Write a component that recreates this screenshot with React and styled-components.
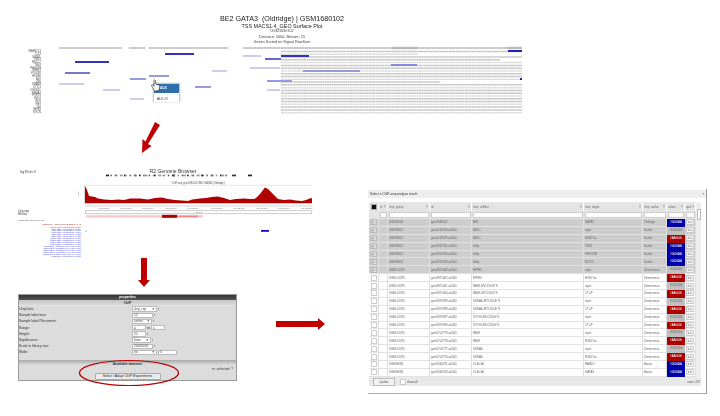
import React from "react";
import styled, { createGlobalStyle } from "styled-components";

const GlobalStyle = createGlobalStyle`
  html, body { margin: 0; padding: 0; background: #fff; }
  body { font-family: "Liberation Sans", Arial, sans-serif; }
`;

const geneLabels = [
  "SMARCC1", "TLX3", "MYB2L", "PBX1", "NKX2-2", "TBX4", "PHOX2B", "GRHL2", "POU2F2", "HOXB5",
  "ALK", "JUN", "SMAD4", "CYTL1", "CDKN1C", "HMGA1", "FOXO1", "LMO1", "GFI1", "MET", "ID2", "MEIS2", "MYCN",
];

const headerSegments = [[59, 122], [129, 145], [149, 228], [243, 522]];
const stripeEnds = { 1: 418, 3: 500, 11: 440 };

const heatBars = [
  [75, 62, 34, "#3333bb"], [165, 54, 29, "#3333bb"], [65, 73, 25, "#7777cc"], [149, 76, 20, "#9999dd"],
  [130, 79, 16, "#9999dd"], [59, 84, 25, "#ccccee"], [103, 90, 17, "#ccccee"], [195, 87, 16, "#9999dd"],
  [130, 99, 14, "#ccccee"], [212, 71, 15, "#ccccee"], [243, 56, 18, "#ccccee"], [265, 59, 16, "#6666cc"],
  [281, 56, 28, "#3333bb"], [250, 68, 30, "#ccccee"], [303, 71, 31, "#9999dd"], [334, 71, 26, "#9999dd"],
  [267, 81, 25, "#9999dd"], [267, 90, 13, "#ccccee"], [391, 65, 26, "#8888dd"], [508, 51, 14, "#2222aa"], [520, 79, 2, "#2222aa"],
];

const signal = [
  [85, 185], [87, 189], [89, 195], [95, 196], [98, 197.5], [104, 198.5], [112, 199], [118, 198.5], [124, 199], [130, 197.5],
  [140, 197.5], [148, 198.5], [155, 197], [162, 196.5], [168, 198], [175, 199], [182, 199.5], [188, 200], [192, 198.5],
  [200, 197.5], [206, 197], [212, 196], [218, 195.5], [224, 197], [230, 199], [236, 198], [244, 197.5], [250, 198], [254, 198],
  [256, 197], [260, 193], [263, 189], [265, 186.5], [268, 188], [272, 192], [275, 195], [278, 198], [284, 199], [290, 198.5],
  [296, 199.5], [302, 200], [306, 199], [311, 197], [312, 197.5],
];

const tickXs = [104, 126, 148, 171, 193, 217, 239, 262, 284, 307];

const ideogram = Array.from({ length: 38 }, (_, i) => ({
  x: 106 + i * 3.2 + (i % 3),
  w: i % 4 === 0 ? 3 : 1.6,
  fill: i === 17 ? "#d99a2b" : i % 5 === 0 ? "#222" : i % 2 ? "#666" : "#999",
}));

const browserLabels = [
  "GSE101295_gsm2871002-e0200", "GSE94822_gsm3128076-e0200", "GSE94822_gsm3128079-e0200", "GSE94822_gsm2915911-e0200",
  "GSE94822_gsm2915910-e0200", "GSE94822_gsm2915909-e0200", "GSE101295_gsm2871003-e0200", "GSE101295_gsm2871001-e0200",
  "GSE101295_gsm2871000-e0200", "GSE101295_gsm2870999-e0200", "GSE101295_gsm2870998-MYCN-e0200", "GSE101295_gsm2870997-MYCN-e0200",
  "GSE101295_gsm2870996-MYCN-e0200", "GSE101295_gsm2702779-MYCN-e0200", "GSE89683_gsm2664371-CLB-GA-e0200", "GSE89683_gsm2664370-e0200",
];

const rows = [
  ["GSE65664", "gsm1680102", "BE2", "GATA3", "Oldridge", "blue", true],
  ["GSE94822", "gsm3128076-e0200", "BE2C", "input", "Durbin", "grey", true],
  ["GSE94822", "gsm3128079-e0200", "BE2C", "H3K27ac", "Durbin", "red", true],
  ["GSE94822", "gsm2915911-e0200", "Kelly", "TBX2", "Durbin", "blue", true],
  ["GSE94822", "gsm2915910-e0200", "Kelly", "PHOX2B", "Durbin", "blue", true],
  ["GSE94822", "gsm2915909-e0200", "Kelly", "MYCN", "Durbin", "blue", true],
  ["GSE101295", "gsm2871003-e0200", "EP983", "input", "Zimmerman", "grey", true],
  ["GSE101295", "gsm2871002-e0200", "EP983", "H3K27ac", "Zimmerman", "red", false],
  ["GSE101295", "gsm2871001-e0200", "NB69-MYCN24h*S", "input", "Zimmerman", "grey", false],
  ["GSE101295", "gsm2871000-e0200", "NB69-MYCN24h*S", "CTCF", "Zimmerman", "red", false],
  ["GSE101295", "gsm2870999-e0200", "SKNAS-MYCN24h*S", "input", "Zimmerman", "grey", false],
  ["GSE101295", "gsm2870998-e0200", "SKNAS-MYCN24h*S", "CTCF", "Zimmerman", "red", false],
  ["GSE101295", "gsm2870997-e0200", "SY5Y6-MYCN24h*S", "input", "Zimmerman", "grey", false],
  ["GSE101295", "gsm2870996-e0200", "SY5Y6-MYCN24h*S", "CTCF", "Zimmerman", "red", false],
  ["GSE101295", "gsm2702779-e0200", "NB69", "input", "Zimmerman", "grey", false],
  ["GSE101295", "gsm2702778-e0200", "NB69", "H3K27ac", "Zimmerman", "red", false],
  ["GSE101295", "gsm2702777-e0200", "SKNAS", "input", "Zimmerman", "grey", false],
  ["GSE101295", "gsm2702776-e0200", "SKNAS", "H3K27ac", "Zimmerman", "red", false],
  ["GSE89683", "gsm2664371-e0200", "CLB-GA", "HAND2", "Boeva", "blue", false],
  ["GSE89683", "gsm2664370-e0200", "CLB-GA", "GATA3", "Boeva", "blue", false],
];

const swatches = {
  blue: { bg: "#0000aa", fg: "#fff", label: "#0000AA" },
  red: { bg: "#aa0000", fg: "#fff", label: "#AA0000" },
  grey: { bg: "#c0c0c0", fg: "#666", label: "#D0D0D0" },
};

const headLabels = ["nr", "chip_group", "id", "chip_cellline", "chip_target", "chip_author", "colors", "upd"];

const Slide = styled.div`
  width: 720px;
  height: 416px;
  padding-top: 15px;
  box-sizing: border-box;
  overflow: hidden;
  background: #fff;
  display: flex;
  flex-direction: column;
`;

const TitleBlock = styled.div`
  width: 564px;
  height: 31px;
  text-align: center;
  filter: blur(0.25px);
`;

const TitleLine = styled.div`
  font-size: ${(p) => p.$size}px;
  line-height: ${(p) => p.$height}px;
  color: ${(p) => p.$color || "#222"};
  white-space: pre;
`;

const HeatSvg = styled.svg`
  display: block;
  width: 540px;
  height: 70px;
  filter: blur(0.35px);
`;

const Arrow = styled.svg`
  display: block;
  flex: none;
  margin-left: ${(p) => p.$left || 0}px;
  margin-top: ${(p) => p.$top || 0}px;
`;

const Lower = styled.div`
  display: flex;
  margin-top: 13px;
`;

const LeftColumn = styled.div`
  width: 368px;
  flex: none;
  display: flex;
  flex-direction: column;
`;

const BrowserSvg = styled.svg`
  display: block;
  width: 320px;
  height: 92px;
  filter: blur(0.25px);
`;

const PanelRow = styled.div`
  display: flex;
  align-items: flex-start;
  padding-left: 18px;
  margin-top: 7px;
`;

const Panel = styled.div`
  position: relative;
  width: 219px;
  height: 87px;
  box-sizing: border-box;
  flex: none;
  border: 1px solid #9a9a9a;
  background: #dcdcdc;
  font-size: 3.4px;
  color: #333;
  display: flex;
  flex-direction: column;
`;

const PanelHead = styled.div`
  height: 5px;
  background: linear-gradient(#333, #555);
  color: #fff;
  font-weight: bold;
  text-align: center;
  line-height: 5px;
  filter: blur(0.2px);
`;

const PanelSub = styled.div`
  height: 6px;
  background: linear-gradient(#c4c4c4, #e0e0e0);
  text-align: center;
  font-weight: bold;
  line-height: 6px;
`;

const FieldRow = styled.div`
  height: 6.2px;
  display: grid;
  grid-template-columns: 113px 1fr;
  align-items: center;
  filter: blur(0.2px);
`;

const FieldControls = styled.div`
  display: flex;
  align-items: center;
  gap: 1px;
`;

const FieldBox = styled.span`
  display: flex;
  justify-content: space-between;
  align-items: center;
  width: ${(p) => p.$width}px;
  height: 5.4px;
  padding: 0 1px;
  box-sizing: border-box;
  background: #fff;
  border: 0.4px solid #bbb;
  font-size: 3.2px;
  color: #444;
`;

const PanelFoot = styled.div`
  flex: 1;
  margin-top: 4px;
  background: linear-gradient(#a8a8a8 0, #dcdcdc 5px);
  display: flex;
  flex-direction: column;
  align-items: center;
  padding-top: 2px;
  position: relative;
`;

const FootTitle = styled.div`
  font-weight: bold;
  line-height: 4px;
`;

const FootRow = styled.div`
  width: 100%;
  display: flex;
  justify-content: flex-end;
  padding-right: 3px;
  box-sizing: border-box;
  line-height: 5px;
  margin-top: 1px;
`;

const AdaptButton = styled.button`
  width: 66px;
  height: 7px;
  padding: 0;
  margin-top: 1px;
  font: 3.4px "Liberation Sans", Arial, sans-serif;
  color: #222;
  background: #ececec;
  border: 0.5px solid #aaa;
  border-radius: 1px;
`;

const Ring = styled.svg`
  position: absolute;
  left: 59px;
  top: 64px;
  pointer-events: none;
`;

const Dialog = styled.div`
  margin-top: 23px;
  width: 339px;
  height: 205px;
  box-sizing: border-box;
  flex: none;
  background: #fff;
  border-right: 1.5px solid #9a9a9a;
  border-bottom: 1.5px solid #a8a8a8;
  display: flex;
  flex-direction: column;
  filter: blur(0.3px);
`;

const DialogBar = styled.div`
  height: 8px;
  margin-top: 1px;
  background: #eeeeee;
  font-size: 3.2px;
  line-height: 8px;
  padding: 0 2px;
  color: #333;
  display: flex;
  justify-content: space-between;
`;

const GridBox = styled.div`
  position: relative;
  margin: 4px 0 0 1px;
  width: 332px;
  height: 184px;
  background: #e8e8e8;
  border-radius: 2px;
  overflow: hidden;
  padding-top: 1px;
  box-sizing: border-box;
`;

const Table = styled.div`
  width: 327px;
  font-size: 2.9px;
  color: #666;
`;

const Row = styled.div`
  display: grid;
  grid-template-columns: 10px 9px 42px 42px 112px 59px 24px 18px 11px;
  height: ${(p) => p.$height || 7.9}px;
  background: ${(p) => (p.$picked ? "#cdcdcd" : p.$head ? "#e4e4e4" : "#fff")};
`;

const HeadCell = styled.div`
  padding: 0 1px;
  line-height: 8px;
  border-right: 0.5px solid #fff;
  overflow: hidden;
  white-space: nowrap;
  display: flex;
  justify-content: space-between;
  align-items: center;
`;

const BlackBox = styled.span`
  display: block;
  width: 4px;
  height: 4px;
  margin: 0 auto;
  background: #111;
  outline: 0.5px solid #aaa;
`;

const FilterCell = styled.div`
  padding: 1px;
`;

const FilterBox = styled.span`
  display: block;
  height: 5.5px;
  background: #fff;
  border: 0.4px solid #ccc;
  box-sizing: border-box;
`;

const Cell = styled.div`
  padding: 0 1px;
  border-right: 0.5px solid #ddd;
  border-bottom: 0.5px solid #e2e2e2;
  overflow: hidden;
  white-space: nowrap;
  display: flex;
  align-items: center;
`;

const Tick = styled.span`
  display: block;
  flex: none;
  width: 4px;
  height: 4px;
  margin: 0 auto;
  background: ${(p) => (p.$on ? "#d8d8d8" : "#fff")};
  border: 0.5px solid ${(p) => (p.$on ? "#bbb" : "#ccc")};
  border-radius: 0.5px;
  font-size: 3px;
  line-height: 4px;
  text-align: center;
  color: #444;
`;

const Swatch = styled.div`
  background: ${(p) => swatches[p.$tone].bg};
  color: ${(p) => swatches[p.$tone].fg};
  text-align: center;
  line-height: 7.4px;
  overflow: hidden;
`;

const SmallBtn = styled.span`
  display: block;
  width: 9px;
  height: 6px;
  margin: 0 auto;
  background: #f2f2f2;
  border: 0.5px solid #ccc;
  text-align: center;
  line-height: 5.5px;
  box-sizing: border-box;
`;

const Scrollbar = styled.div`
  position: absolute;
  right: 0;
  top: 0;
  bottom: 8px;
  width: 5px;
  background: #eee;
`;

const ScrollThumb = styled.div`
  margin: 7px 0.5px 0;
  height: 9px;
  background: #fff;
  border: 0.5px solid #bbb;
`;

const GridFoot = styled.div`
  position: absolute;
  left: 0;
  right: 0;
  bottom: 0;
  height: 8px;
  background: #e8e8e8;
  display: flex;
  align-items: center;
  font-size: 2.9px;
  color: #555;
  padding: 0 1px 0 4px;
`;

const UpdateBtn = styled.span`
  width: 20px;
  height: 6.5px;
  background: #f2f2f2;
  border: 0.5px solid #bbb;
  text-align: center;
  line-height: 6px;
  margin-right: 5px;
`;

const ShowAll = styled.span`
  display: flex;
  align-items: center;
  gap: 1px;
  flex: 1;
  & > span {
    margin: 0;
  }
`;

const PopupWrap = styled.div`
  position: absolute;
  left: 153px;
  top: 83px;
  width: 27px;
  height: 19px;
  box-sizing: border-box;
  background: #fff;
  border: 0.5px solid #ccc;
  border-radius: 1px;
  box-shadow: 0 0 1.5px rgba(0, 0, 0, 0.4);
  font-size: 3.4px;
  filter: blur(0.2px);
`;

const PopupItem = styled.div`
  height: 9px;
  line-height: ${(p) => (p.$active ? "9px" : "12px")};
  padding-left: ${(p) => (p.$active ? "6px" : "3px")};
  background: ${(p) => (p.$active ? "#2f6eac" : "#fff")};
  color: ${(p) => (p.$active ? "#fff" : "#333")};
  font-weight: ${(p) => (p.$active ? "bold" : "normal")};
`;

const Hand = styled.svg`
  position: absolute;
  left: -3px;
  top: -5px;
`;

function HeatMap() {
  return (
    <HeatSvg viewBox="0 46 540 70">
      {geneLabels.map((name, i) => (
        <text key={name} x="41" y={52 + i * 2.78} fontSize="2.6" textAnchor="end" fill="#444">{name}</text>
      ))}
      {headerSegments.map(([a, b]) => (
        <line key={a} x1={a} x2={b} y1="48" y2="48" stroke="#aaa" strokeWidth="1.3" strokeDasharray="1.2 0.3" />
      ))}
      <rect x="392" y="46.8" width="26" height="2.4" fill="#bbb" />
      <rect x="508" y="46.8" width="14" height="2.4" fill="#bbb" />
      {geneLabels.map((name, i) => (
        <line
          key={name}
          x1="281"
          x2={stripeEnds[i] || 522}
          y1={51.5 + i * 2.78}
          y2={51.5 + i * 2.78}
          stroke={i % 3 === 1 ? "#dcdcdc" : "#c4c4c4"}
          strokeWidth="1.5"
          strokeDasharray="2 0.3"
        />
      ))}
      {heatBars.map(([x, y, w, fill]) => (
        <rect key={`${x}-${y}`} x={x} y={y - 1} width={w} height="2" fill={fill} />
      ))}
    </HeatSvg>
  );
}

function Popup() {
  // context menu + hand cursor sitting over the heat map
  return (
    <PopupWrap>
      <PopupItem $active>ALK</PopupItem>
      <PopupItem>ALK-YI</PopupItem>
      <Hand viewBox="0 0 10 14" width="10" height="14">
        <path
          d="M3 1.2c.7-.6 1.4-.2 1.5.6l.4 3.4 2.6.7c1 .3 1.4 1 1.2 2l-.6 3.4-4.2 1-2.2-3.6L.4 6.6c-.3-.7.5-1.2 1.1-.8l1.6 1.5z"
          fill="#fff"
          stroke="#333"
          strokeWidth="0.7"
        />
      </Hand>
    </PopupWrap>
  );
}

function Browser() {
  const area = `85,202.3 ${signal.map((p) => p.join(",")).join(" ")} 312,202.3`;
  return (
    <BrowserSvg viewBox="0 165 320 92">
      <text x="20" y="172" fontSize="3.8" fill="#444">hg19chr2</text>
      <text x="173" y="172" fontSize="5" fill="#333" textAnchor="middle">R2 Genome Browser</text>
      {ideogram.map((b) => (
        <rect key={b.x} x={b.x} y="173.6" width={b.w} height="1.7" fill={b.fill} />
      ))}
      <rect x="232" y="173.6" width="4" height="1.7" fill="#333" />
      <rect x="248" y="173.6" width="4" height="1.7" fill="#222" />
      <text x="198" y="183" fontSize="2.6" fill="#555" textAnchor="middle">ChIP-seq gsm1680102 BE2 GATA3 (Oldridge)</text>
      <line x1="85" x2="312" y1="184.3" y2="184.3" stroke="#f4c9c9" strokeWidth="0.6" />
      {[188, 192, 196, 200].map((y) => (
        <line key={y} x1="85" x2="312" y1={y} y2={y} stroke="#f2f2f2" strokeWidth="0.4" />
      ))}
      <line x1="84.5" x2="84.5" y1="184" y2="203" stroke="#999" strokeWidth="0.4" />
      <text x="79" y="193" fontSize="2" fill="#666" transform="rotate(-90 79 193)" textAnchor="middle">Signal</text>
      <polygon points={area} fill="#b00000" />
      <line x1="85" x2="312" y1="205" y2="205" stroke="#aaa" strokeWidth="0.5" />
      {tickXs.map((x) => (
        <text key={x} x={x} y="208.4" fontSize="2.2" textAnchor="middle" fill="#666">86,145,000</text>
      ))}
      <rect x="85.5" y="209.8" width="226" height="3" fill="#fff" stroke="#999" strokeWidth="0.5" />
      <text x="199" y="212" fontSize="2" textAnchor="middle" fill="#666">GATA3</text>
      <rect x="86" y="214.2" width="117" height="2.4" fill="#f8c8c8" />
      <rect x="162" y="213.8" width="15" height="3" fill="#b00000" />
      <rect x="177" y="214.6" width="21" height="1.6" fill="#e88" />
      <text x="18" y="211" fontSize="2.6" fill="#444">Coverage</text>
      <text x="18" y="214" fontSize="2.6" fill="#444">RefSeq</text>
      <text x="18" y="219.5" fontSize="2.4" fill="#444">r46mm10_gene_reg_ref</text>
      <text x="81" y="223.5" fontSize="2.3" fill="#c03030" textAnchor="end">GSE65664_gsm1680102-BE2-GATA3</text>
      {browserLabels.map((name, i) => (
        <text key={name} x="81" y={226.6 + i * 1.93} fontSize="2.1" fill="#5555dd" textAnchor="end">{name}</text>
      ))}
      <rect x="85.5" y="229.3" width="1" height="1.6" fill="#9999dd" />
      <rect x="261" y="229" width="8" height="1.8" fill="#1111bb" />
    </BrowserSvg>
  );
}

function Properties() {
  return (
    <Panel>
      <PanelHead>properties</PanelHead>
      <PanelSub>ChIP</PanelSub>
      <FieldRow>ChipData:<FieldControls><FieldBox $width={25}>chip_rep<span>▼</span></FieldBox> i</FieldControls></FieldRow>
      <FieldRow>Sample label size:<FieldControls><FieldBox $width={21}>12</FieldBox> i</FieldControls></FieldRow>
      <FieldRow>Sample label Placement:<FieldControls><FieldBox $width={20}>center<span>▼</span></FieldBox> i</FieldControls></FieldRow>
      <FieldRow>Range:<FieldControls><FieldBox $width={14}>a</FieldBox> to <FieldBox $width={14}>a</FieldBox></FieldControls></FieldRow>
      <FieldRow>Height:<FieldControls><FieldBox $width={14}>50</FieldBox> i</FieldControls></FieldRow>
      <FieldRow>Significance:<FieldControls><FieldBox $width={19}>false<span>▼</span></FieldBox> i</FieldControls></FieldRow>
      <FieldRow>Scale to library size:<FieldControls><FieldBox $width={21}>20000000</FieldBox> i</FieldControls></FieldRow>
      <FieldRow>Slider<FieldControls><FieldBox $width={25}>no<span>▼</span></FieldBox><FieldBox $width={19}>0</FieldBox></FieldControls></FieldRow>
      <PanelFoot>
        <FootTitle>Available datasets</FootTitle>
        <FootRow>nr. selected: ?</FootRow>
        <AdaptButton>Select / Adapt ChIP-Experiments</AdaptButton>
      </PanelFoot>
      <Ring width="102" height="28" viewBox="0 0 102 28">
        <ellipse cx="51" cy="14" rx="49.5" ry="12.5" fill="none" stroke="#b80000" strokeWidth="1.2" />
      </Ring>
    </Panel>
  );
}

function ResultTable() {
  return (
    <Table>
      <Row $head $height={8}>
        <HeadCell><BlackBox /></HeadCell>
        {headLabels.map((label) => (
          <HeadCell key={label}>{label}<span>Y</span></HeadCell>
        ))}
      </Row>
      <Row $head $height={8}>
        <FilterCell />
        {headLabels.map((label) => (
          <FilterCell key={label}><FilterBox /></FilterCell>
        ))}
      </Row>
      {rows.map((r) => (
        <Row key={r[1]} $picked={r[6]}>
          <Cell><Tick $on={r[6]}>{r[6] ? "✓" : ""}</Tick></Cell>
          <Cell />
          <Cell>{r[0]}</Cell>
          <Cell>{r[1]}</Cell>
          <Cell>{r[2]}</Cell>
          <Cell>{r[3]}</Cell>
          <Cell>{r[4]}</Cell>
          <Swatch $tone={r[5]}>{swatches[r[5]].label}</Swatch>
          <Cell><SmallBtn>s.s.</SmallBtn></Cell>
        </Row>
      ))}
    </Table>
  );
}

export default function App() {
  return (
    <>
      <GlobalStyle />
      <Slide>
        <TitleBlock>
          <TitleLine $size={7.2} $height={8}>BE2 GATA3  (Oldridge) | GSM1680102</TitleLine>
          <TitleLine $size={5.4} $height={6}>TSS MACS1.4_GEO Surface Plot</TitleLine>
          <TitleLine $size={3.8} $height={5.5} $color="#555">GSM1680102</TitleLine>
          <TitleLine $size={3.8} $height={5} $color="#444">Distance: 5000, Binsize: 25</TitleLine>
          <TitleLine $size={3.8} $height={5.5} $color="#444">Genes Sorted on Signal RowSum</TitleLine>
        </TitleBlock>
        <HeatMap />
        <Popup />
        <Arrow $left={139} $top={6} width="24" height="31" viewBox="0 0 24 31">
          <polygon points="16,0 21,3 9,22 12.5,24 3,31 3.5,17 6.5,19.5" fill="#c00000" />
        </Arrow>
        <Lower>
          <LeftColumn>
            <Browser />
            <Arrow $left={138} width="12" height="29" viewBox="0 0 12 29">
              <polygon points="3,0 9,0 9,22 12,22 6,29 0,22 3,22" fill="#c00000" />
            </Arrow>
            <PanelRow>
              <Properties />
              <Arrow $left={39} $top={24} width="49" height="12" viewBox="0 0 49 12">
                <polygon points="0,3 42,3 42,0 49,6 42,12 42,9 0,9" fill="#c00000" />
              </Arrow>
            </PanelRow>
          </LeftColumn>
          <Dialog>
            <DialogBar>
              <span>Select a ChIP-seq analysis result:</span>
              <span>×</span>
            </DialogBar>
            <GridBox>
              <ResultTable />
              <Scrollbar><ScrollThumb /></Scrollbar>
              <GridFoot>
                <UpdateBtn>Update</UpdateBtn>
                <ShowAll><Tick />show all</ShowAll>
                <span>rows: 207</span>
              </GridFoot>
            </GridBox>
          </Dialog>
        </Lower>
      </Slide>
    </>
  );
}
